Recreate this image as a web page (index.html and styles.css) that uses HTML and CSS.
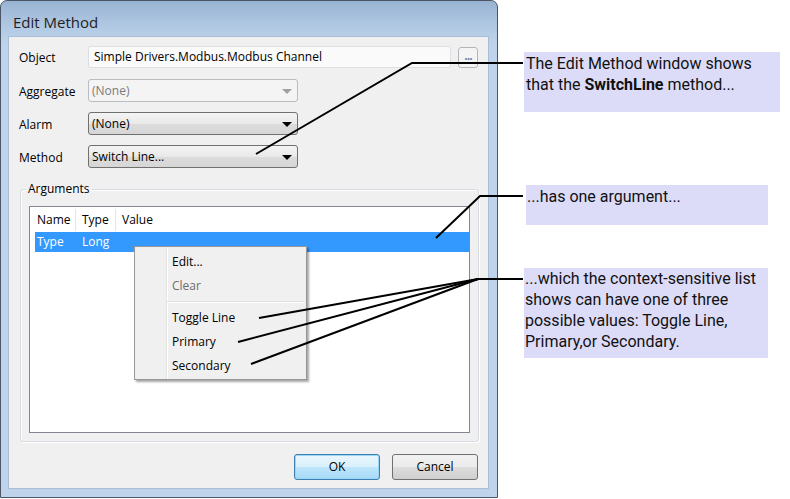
FILE: index.html
```html
<!DOCTYPE html>
<html>
<head>
    <title>Edit Method</title>
    <link rel="stylesheet" href="styles.css">
</head>
<body>
    <div class="page">
        <div class="window">
            <div class="titlebar">Edit Method</div>
            <div class="client">
                <div class="field">
                    <label>Object</label>
                    <div class="textbox">Simple Drivers.Modbus.Modbus Channel</div>
                    <div class="browse">...</div>
                </div>
                <div class="field combo-row">
                    <label>Aggregate</label>
                    <div class="combo disabled">(None)<span class="arrow"></span></div>
                </div>
                <div class="field combo-row">
                    <label>Alarm</label>
                    <div class="combo">(None)<span class="arrow"></span></div>
                </div>
                <div class="field combo-row">
                    <label>Method</label>
                    <div class="combo">Switch Line...<span class="arrow"></span></div>
                </div>

                <fieldset class="group">
                    <legend>Arguments</legend>
                    <div class="listview">
                        <div class="lv-header">
                            <div class="lv-col col-name">Name</div>
                            <div class="lv-col col-type">Type</div>
                            <div class="lv-col col-value">Value</div>
                        </div>
                        <div class="lv-row selected">
                            <div class="lv-cell cell-name">Type</div>
                            <div class="lv-cell cell-type">Long</div>
                            <div class="lv-cell cell-value"></div>
                        </div>
                    </div>
                </fieldset>

                <div class="buttons">
                    <div class="btn default">OK</div>
                    <div class="btn">Cancel</div>
                </div>
            </div>

            <div class="context-menu">
                <div class="menu-item">Edit...</div>
                <div class="menu-item grayed">Clear</div>
                <div class="menu-sep"></div>
                <div class="menu-item">Toggle Line</div>
                <div class="menu-item">Primary</div>
                <div class="menu-item">Secondary</div>
            </div>
        </div>

        <div class="notes">
            <div class="note note-method">The Edit Method window shows that the <b>SwitchLine</b> method...</div>
            <div class="note note-arg">...has one argument...</div>
            <div class="note note-values">...which the context-sensitive list shows can have one of three possible values: Toggle Line, Primary,or Secondary.</div>
        </div>

        <svg class="callouts" width="790" height="499" viewBox="0 0 790 499">
            <g fill="none" stroke="#000" stroke-width="2">
                <path d="M523 63 H412 L256 154" />
                <path d="M523 196 H480 L436 238" />
                <path d="M523 279 H478 L259 318" />
                <path d="M478 279 L238 342" />
                <path d="M478 279 L251 364" />
            </g>
        </svg>
    </div>
</body>
</html>
```

FILE: styles.css
```css
body {
    margin: 0;
    background: #fff;
    font-family: "Open Sans", "Noto Sans", sans-serif;
    font-size: 12px;
    color: #000;
}

.page {
    position: relative;
    width: 790px;
    height: 499px;
    display: flex;
    align-items: flex-start;
}

/* dialog window */

.window {
    position: relative;
    width: 498px;
    height: 498px;
    box-sizing: border-box;
    border: 1px solid #4a5566;
    border-radius: 7px 7px 0 0;
    background: linear-gradient(180deg, #98b3d2 0px, #b5cce6 30px, #bfd4eb 45px, #bfd4eb 100%);
    display: flex;
    flex-direction: column;
    padding: 0 8px 8px 8px;
}

.titlebar {
    height: 35px;
    line-height: 42px;
    padding-left: 4px;
    font-size: 15px;
    color: #1e1e1e;
}

.client {
    flex: 1;
    background: #f0f0f0;
    border: 1px solid #a9bdd4;
    margin-left: -1px;
    padding: 9px 9px 8px 10px;
    display: flex;
    flex-direction: column;
}

.field {
    display: flex;
    align-items: center;
    height: 22px;
}

.combo-row {
    height: 23px;
    margin-top: 11px;
}

.combo-row + .combo-row {
    margin-top: 10px;
}

.field label {
    width: 69px;
    padding-top: 1px;
}

.textbox {
    box-sizing: border-box;
    width: 363px;
    height: 22px;
    line-height: 20px;
    padding-left: 5px;
    border: 1px solid #dcdfe3;
    background: #fafafa;
    border-radius: 2px;
}

.browse {
    box-sizing: border-box;
    width: 20px;
    height: 21px;
    margin-left: 7px;
    border: 1px solid #b3b6b9;
    border-radius: 3px;
    background: #f4f4f4;
    color: #6f87a8;
    text-align: center;
    line-height: 16px;
    font-size: 12px;
    font-weight: bold;
    letter-spacing: -1px;
}

.combo {
    position: relative;
    box-sizing: border-box;
    width: 210px;
    height: 23px;
    line-height: 22px;
    padding-left: 3px;
    border: 1px solid #707070;
    border-radius: 3px;
    background: linear-gradient(180deg, #f4f4f4 0%, #e9e9e9 50%, #dcdcdc 51%, #d6d6d6 100%);
}

.combo.disabled {
    border-color: #b9bcc0;
    background: #f4f4f4;
    color: #7a7a7a;
}

.arrow {
    position: absolute;
    right: 5px;
    top: 9px;
    width: 0;
    height: 0;
    border-left: 5px solid transparent;
    border-right: 5px solid transparent;
    border-top: 5px solid #000;
}

.combo.disabled .arrow {
    border-top-color: #a0a0a0;
}

/* arguments group */

.group {
    margin: 13px 0 0 1px;
    padding: 0 8px 8px 8px;
    border: 1px solid #d5dbe1;
    border-radius: 3px;
    box-shadow: inset 1px 1px 0 #fff, 1px 1px 0 #fff;
}

.group legend {
    padding: 0 2px;
    margin-left: -3px;
    line-height: 16px;
}

.listview {
    margin-top: 9px;
    height: 227px;
    box-sizing: border-box;
    border: 1px solid #828790;
    background: #fff;
}

.lv-header {
    display: flex;
    height: 24px;
    padding-top: 2px;
    box-sizing: border-box;
    line-height: 22px;
}

.lv-col {
    box-sizing: border-box;
    padding-left: 6px;
    border-right: 1px solid #e5e5e5;
}

.col-name {
    width: 46px;
    padding-left: 7px;
}

.col-type {
    width: 40px;
}

.col-value {
    flex: 1;
    border-right: none;
}

.lv-row {
    display: flex;
    height: 20px;
    line-height: 20px;
    margin: 1px 0 0 5px;
}

.lv-row.selected {
    background: #3399ff;
    color: #fff;
}

.lv-cell {
    box-sizing: border-box;
}

.cell-name {
    width: 41px;
    padding-left: 2px;
}

.cell-type {
    width: 40px;
    padding-left: 6px;
}

.cell-value {
    flex: 1;
}

/* dialog buttons */

.buttons {
    margin-top: auto;
    margin-right: 1px;
    display: flex;
    justify-content: flex-end;
    gap: 12px;
}

.btn {
    box-sizing: border-box;
    width: 86px;
    height: 26px;
    line-height: 24px;
    text-align: center;
    border: 1px solid #707070;
    border-radius: 3px;
    background: linear-gradient(180deg, #f2f2f2 0%, #ebebeb 50%, #dddddd 51%, #cfcfcf 100%);
}

.btn.default {
    border-color: #3c7fb1;
    background: linear-gradient(180deg, #eaf6fd 0%, #d9f0fc 50%, #bee6fd 51%, #a7d9f5 100%);
    box-shadow: inset 0 0 0 1px #9ad6f5;
}

/* popup menu over the list */

.context-menu {
    position: absolute;
    left: 133px;
    top: 245px;
    width: 173px;
    box-sizing: border-box;
    padding: 3px 2px 1px 2px;
    border: 1px solid #979797;
    background: linear-gradient(90deg, #f0f0f0 31px, #e2e3e3 31px, #e2e3e3 32px, #fff 32px, #fff 33px, #f0f0f0 33px);
    box-shadow: 2px 2px 2px rgba(0, 0, 0, 0.35);
}

.menu-item {
    height: 24px;
    line-height: 24px;
    padding-left: 35px;
}

.menu-item.grayed {
    color: #6d6d6d;
}

.menu-sep {
    height: 8px;
    margin-left: 30px;
    background: linear-gradient(180deg, transparent 3px, #e0e0e0 3px, #e0e0e0 4px, #fff 4px, #fff 5px, transparent 5px);
}

/* annotations */

.notes {
    display: flex;
    flex-direction: column;
    align-items: flex-start;
    padding-top: 52px;
    margin-left: 26px;
    font-family: Roboto, "Liberation Sans", sans-serif;
    font-size: 16px;
    line-height: 21px;
    color: #111;
}

.note {
    box-sizing: border-box;
    background: #dddcf8;
}

.note-method {
    width: 256px;
    height: 60px;
    padding: 1px 0 0 2px;
}

.note-arg {
    width: 242px;
    height: 40px;
    margin: 73px 0 0 2px;
    padding: 1px 0 0 1px;
}

.note-values {
    width: 244px;
    height: 90px;
    margin-top: 43px;
    padding: 0 0 0 1px;
}

.callouts {
    position: absolute;
    left: 0;
    top: 0;
    pointer-events: none;
}
```
